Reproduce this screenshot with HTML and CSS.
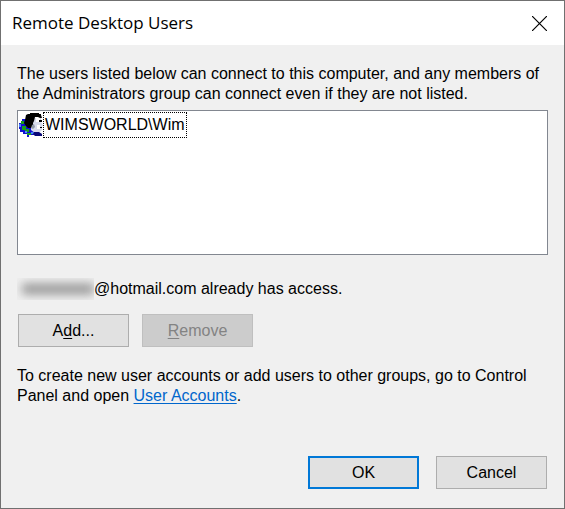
FILE: index.html
```html
<!DOCTYPE html>
<html lang="en">
<head>
  <meta charset="UTF-8" />
  <meta name="viewport" content="width=device-width, initial-scale=1.0"/>
  <title>Remote Desktop Users</title>
  <link rel="stylesheet" href="styles.css">
</head>
<body>
  <div class="dialog">
    <header class="title-bar">
      <h1>Remote Desktop Users</h1>
      <button type="button" class="close" aria-label="Close">
        <svg width="15" height="15" viewBox="0 0 15 15">
          <path d="M0 0L15 15M15 0L0 15" fill="none" stroke="#000" stroke-width="1.2"/>
        </svg>
      </button>
    </header>

    <form class="content">
      <p id="list-label">The users listed below can connect to this computer, and any members of the Administrators group can connect even if they are not listed.</p>

      <ul class="user-list" role="listbox" aria-labelledby="list-label">
        <li role="option" aria-selected="false">
          <svg class="user-icon" width="24" height="24" viewBox="0 0 24 24">
            <!-- globe -->
            <path d="M3 6h6v9h5v2h4v3h-2v2h-6v2H8v-3H4v-2H1v-3H0v-6h3z" fill="#1010d0"/>
            <path d="M2 8h3v3H2zM3 13h4v3h3v3H6v-2H3zM8 20h4v2H8z" fill="#18a018"/>
            <path d="M0 11h2v3H0zM6 18h2v2H6zM12 19h3v2h-3z" fill="#4888f8"/>
            <!-- face -->
            <path d="M14 5h8v4l2 3-1 2v3l-2 2h-4l-1 1-4-3v-4z" fill="#d8dcec"/>
            <path d="M17 5h4v4h-4zM18 12h3v4h-3z" fill="#fff"/>
            <path d="M20 7h3v2h-3zM21 14h2v1h-2z" fill="#000"/>
            <!-- hair -->
            <path d="M7 2l2-1h2V0h9v1h2v1l1 3h-2l-2-1h-3l-1 4-1 2v3l-2 2H9l-2-2-2-3 1-3z" fill="#000"/>
            <path d="M13 12l2-1 1 3-2 2-2-1z" fill="#9098a8"/>
            <path d="M15 19h5l3 2v2h-7l-2-2z" fill="#080878"/>
          </svg>
          <span class="user-name">WIMSWORLD\Wim</span>
        </li>
      </ul>

      <p class="access"><span class="hidden-name"></span>@hotmail.com already has access.</p>

      <div class="list-buttons">
        <button type="button"><span>A<u>d</u>d...</span></button>
        <button type="button" disabled><span><u>R</u>emove</span></button>
      </div>

      <p>To create new user accounts or add users to other groups, go to Control Panel and open <a href="#">User Accounts</a>.</p>

      <div class="dialog-buttons">
        <button type="submit" class="default">OK</button>
        <button type="button">Cancel</button>
      </div>
    </form>
  </div>
</body>
</html>
```
FILE: styles.css
```css
* {
  box-sizing: border-box;
}

body {
  margin: 0;
  font-family: "Liberation Sans", Arial, sans-serif;
  font-size: 16px;
  line-height: 20px;
  color: #000;
  background: #f0f0f0;
}

.dialog {
  display: flex;
  flex-direction: column;
  min-height: 100vh;
  border: 1px solid #707070;
}

.title-bar {
  display: flex;
  justify-content: space-between;
  align-items: center;
  height: 44px;
  padding: 0 17px 0 11px;
  background: #fff;
}

h1 {
  margin: 0;
  font-family: "Open Sans", "Noto Sans", sans-serif;
  font-size: 17px;
  font-weight: normal;
}

.close {
  display: flex;
  padding: 0;
  border: none;
  background: none;
}

.content {
  display: flex;
  flex: 1;
  flex-direction: column;
  padding: 19px 16px;
}

p {
  margin: 0;
}

.user-list {
  height: 145px;
  margin: 6px 0 23px;
  padding: 1px;
  list-style: none;
  border: 1px solid #828790;
  background: #fff;
}

.user-list li {
  display: flex;
  align-items: center;
}

.user-name {
  padding: 2px 1px;
  border: 1px dotted #000;
}

.access {
  display: flex;
  align-items: center;
}

.hidden-name {
  width: 77px;
  height: 22px;
  padding: 5px 0 5px 5px;
  overflow: hidden;
}

.hidden-name::before {
  content: "";
  display: block;
  height: 12px;
  background: #a0a0a0;
  filter: blur(5px);
}

.list-buttons,
.dialog-buttons {
  display: flex;
  gap: 13px;
}

.list-buttons {
  margin: 14px 0 19px;
  padding-left: 1px;
}

.dialog-buttons {
  gap: 17px;
  justify-content: flex-end;
  margin-top: auto;
  padding-right: 1px;
}

.list-buttons button,
.dialog-buttons button {
  width: 111px;
  height: 33px;
  padding: 0;
  font: inherit;
  color: #000;
  border: 1px solid #adadad;
  background: #e1e1e1;
}

.dialog-buttons .default {
  border: 2px solid #0078d7;
}

.list-buttons button:disabled {
  color: #838383;
  border-color: #bfbfbf;
  background: #ccc;
}

u {
  text-underline-offset: 2px;
}

a {
  color: #0066cc;
  text-underline-offset: 2px;
}
```
